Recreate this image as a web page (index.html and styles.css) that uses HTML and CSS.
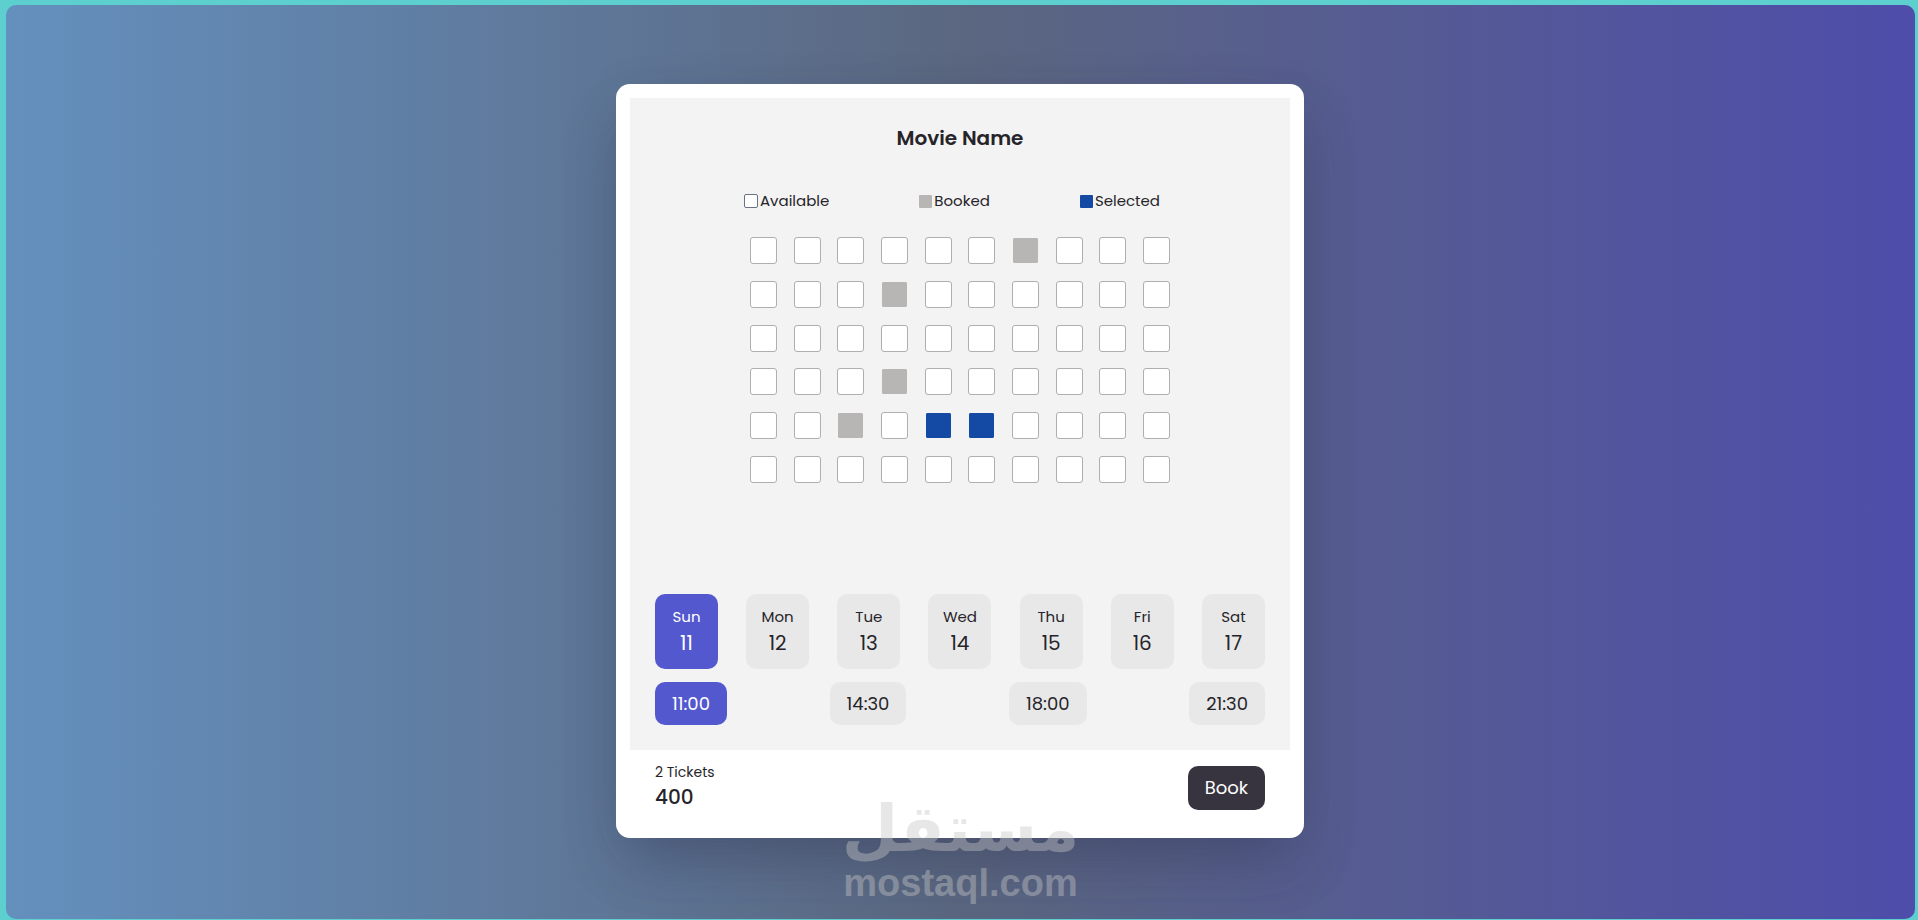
FILE: index.html
```html
<!DOCTYPE html>
<html lang="en">
<head>
  <meta charset="utf-8">
  <meta name="viewport" content="width=device-width, initial-scale=1">
  <title>Movie Name</title>
  <link rel="stylesheet" href="styles.css">
</head>
<body>
  <main class="stage">
    <form class="card">
      <div class="panel">
        <h1 class="title">Movie Name</h1>
        <ul class="legend">
          <li class="legend-item"><span class="swatch"></span>Available</li>
          <li class="legend-item"><span class="swatch swatch-booked"></span>Booked</li>
          <li class="legend-item"><span class="swatch swatch-selected"></span>Selected</li>
        </ul>
        <div class="seats" id="seats"></div>
        <div class="schedule">
          <div class="days">
            <label class="day"><input class="choice" type="radio" name="day" checked><span class="day-name">Sun</span><span class="day-number">11</span></label>
            <label class="day"><input class="choice" type="radio" name="day"><span class="day-name">Mon</span><span class="day-number">12</span></label>
            <label class="day"><input class="choice" type="radio" name="day"><span class="day-name">Tue</span><span class="day-number">13</span></label>
            <label class="day"><input class="choice" type="radio" name="day"><span class="day-name">Wed</span><span class="day-number">14</span></label>
            <label class="day"><input class="choice" type="radio" name="day"><span class="day-name">Thu</span><span class="day-number">15</span></label>
            <label class="day"><input class="choice" type="radio" name="day"><span class="day-name">Fri</span><span class="day-number">16</span></label>
            <label class="day"><input class="choice" type="radio" name="day"><span class="day-name">Sat</span><span class="day-number">17</span></label>
          </div>
          <div class="times">
            <label class="time"><input class="choice" type="radio" name="time" checked>11:00</label>
            <label class="time"><input class="choice" type="radio" name="time">14:30</label>
            <label class="time"><input class="choice" type="radio" name="time">18:00</label>
            <label class="time"><input class="choice" type="radio" name="time">21:30</label>
          </div>
        </div>
      </div>
      <div class="footer">
        <div class="total">
          <span class="count">2 Tickets</span>
          <span class="amount">400</span>
        </div>
        <button class="book" type="button">Book</button>
      </div>
    </form>
    <div class="watermark">
      <span class="mark-name" lang="ar" dir="rtl">مستقل</span>
      <span class="mark-site">mostaql.com</span>
    </div>
  </main>
  <script src="seats.js"></script>
</body>
</html>
```
FILE: styles.css
```css
* {
  box-sizing: border-box;
}

body {
  margin: 0;
  background: #5ecfcf;
  color: #262429;
  font-family: Poppins, Inter, "Noto Sans", sans-serif;
}

.stage {
  position: relative;
  display: flex;
  align-items: center;
  justify-content: center;
  min-height: calc(100vh - 6px);
  margin: 5px 3px 1px 6px;
  padding: 0 1px 2px 0;
  border-radius: 10px;
  background: linear-gradient(90deg, #6490be, #5b6780 50%, #4e4daa);
}

.card {
  width: 688px;
  max-width: 100%;
  padding: 14px;
  border-radius: 14px;
  background: #fff;
  box-shadow: 0 30px 60px -12px rgba(50, 50, 93, 0.25), 0 24px 60px -12px rgba(50, 60, 80, 0.35);
}

.panel {
  padding: 25px;
  background: #f3f3f3;
}

.title {
  margin: 0;
  font-size: 20px;
  font-weight: 600;
  line-height: 30px;
  text-align: center;
}

.legend {
  display: flex;
  justify-content: center;
  gap: 90px;
  margin: 36px 0 0;
  padding: 0 16px 0 0;
  list-style: none;
  font-size: 15px;
  line-height: 24px;
}

.legend-item {
  display: flex;
  align-items: center;
  gap: 2px;
}

.swatch {
  width: 14px;
  height: 14px;
  border: 1px solid #6b7284;
  border-radius: 2px;
  background: #fff;
}

.swatch-booked,
.swatch-selected {
  width: 13px;
  height: 13px;
  border: 0;
  border-radius: 1px;
  background: #b7b6b4;
}

.swatch-selected {
  background: #144aa3;
}

.seats {
  display: grid;
  grid-template-columns: repeat(10, 27px);
  justify-content: space-between;
  align-content: space-between;
  width: 420px;
  max-width: 100%;
  min-height: 246px;
  margin: 24px auto 0;
}

.seat {
  appearance: none;
  width: 27px;
  height: 27px;
  margin: 0;
  border: 1px solid #b0afae;
  border-radius: 3px;
  background: #fff;
}

.seat:disabled,
.seat:checked {
  border-color: #f3f3f3;
  border-radius: 2px;
  background: #b7b6b4;
  background-clip: padding-box;
}

.seat:checked {
  background-color: #144aa3;
}

.schedule {
  display: flex;
  flex-direction: column;
  gap: 13px;
  margin-top: 111px;
}

.days,
.times {
  display: flex;
  justify-content: space-between;
}

.day,
.time {
  position: relative;
  border-radius: 10px;
  background: #e8e8e8;
}

.day {
  display: flex;
  flex-direction: column;
  align-items: center;
  width: 63px;
  padding: 10px 0 13px;
}

.day:has(:checked),
.time:has(:checked) {
  background: #5358cf;
  color: #fff;
}

.choice {
  position: absolute;
  inset: 0;
  margin: 0;
  opacity: 0;
}

.day-name {
  font-size: 15px;
  line-height: 26px;
}

.day-number {
  font-size: 20px;
  line-height: 26px;
}

.time {
  padding: 0 17px;
  font-size: 18px;
  line-height: 43px;
}

.footer {
  display: flex;
  align-items: flex-end;
  justify-content: space-between;
  padding: 10px 25px 14px;
}

.total {
  display: flex;
  flex-direction: column;
}

.count {
  font-size: 14px;
  line-height: 24px;
}

.amount {
  font-size: 20px;
  font-weight: 500;
  line-height: 26px;
}

.book {
  padding: 0 17px;
  border: 0;
  border-radius: 10px;
  background: #37343f;
  color: #fff;
  font: 400 18px/44px Poppins, Inter, "Noto Sans", sans-serif;
}

.watermark {
  position: absolute;
  bottom: 16px;
  left: 50%;
  display: flex;
  flex-direction: column;
  align-items: center;
  transform: translateX(-50%);
  color: #c7c7c7;
  opacity: 0.41;
  pointer-events: none;
}

.mark-name {
  font: 700 65px/68px "DejaVu Sans", sans-serif;
}

.mark-site {
  font: 700 38px/40px "Liberation Sans", Arial, sans-serif;
}
```
FILE: seats.js
```js
const rows = 6;
const columns = 10;
const booked = [7, 14, 34, 43];
const selected = [45, 46];
const seats = document.getElementById("seats");

for (let number = 1; number <= rows * columns; number += 1) {
  const seat = document.createElement("input");
  seat.type = "checkbox";
  seat.className = "seat";
  seat.name = "seat";
  seat.value = number;
  seat.disabled = booked.includes(number);
  seat.checked = selected.includes(number);
  seat.setAttribute("aria-label", "Seat " + number);
  seats.append(seat);
}
```
